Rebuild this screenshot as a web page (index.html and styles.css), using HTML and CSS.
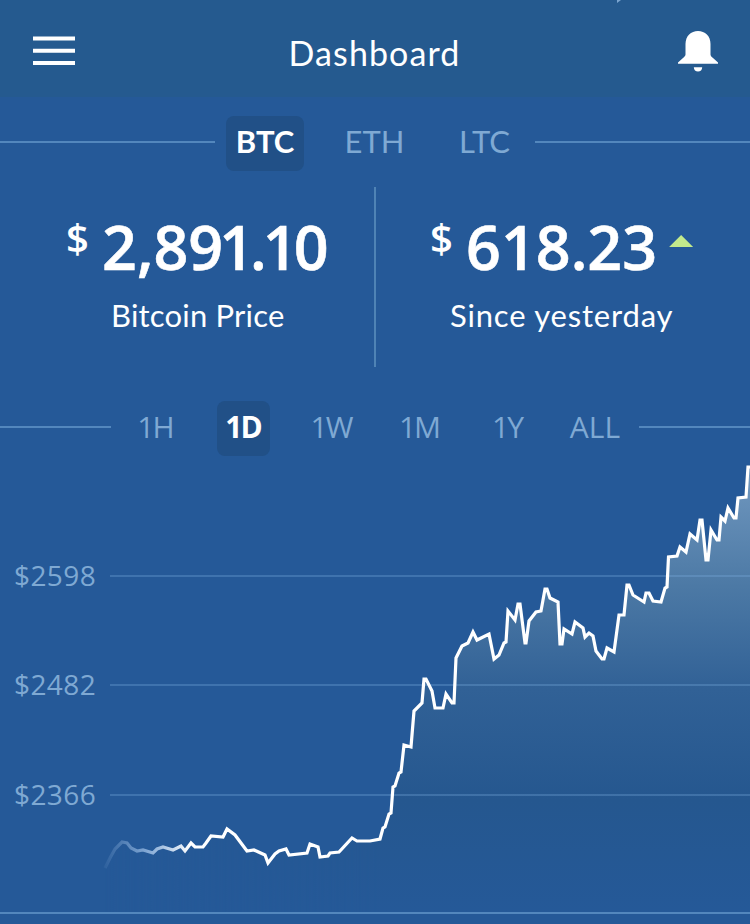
FILE: index.html
```html
<!DOCTYPE html>
<html lang="en">
<head>
  <meta charset="UTF-8">
  <meta name="viewport" content="width=device-width, initial-scale=1.0">
  <title>Dashboard</title>
  <link rel="stylesheet" href="styles.css">
</head>
<body>
  <header class="header">
    <button class="icon-btn menu-btn" aria-label="Menu">
      <svg width="42" height="30" viewBox="0 0 42 30">
        <path d="M0 2.5h42M0 14.8h42M0 27h42" stroke="#fff" stroke-width="4"/>
      </svg>
    </button>
    <h1>Dashboard</h1>
    <button class="icon-btn bell-btn" aria-label="Notifications">
      <svg width="40" height="41" viewBox="0 0 40 41">
        <path d="M7.5 13C7.5 5 13 0 20 0s12.500 5 12.500 13v10.500c0 1.500 1.300 2.500 2.500 3.500l5 4.500v1.200H0v-1.200L5 27c1.300-1.200 2.500-2 2.500-3.500z" fill="#fff"/>
        <path d="M15.800 36.200h8.400c0 2.700-1.800 4.300-4.200 4.300s-4.200-1.600-4.200-4.300z" fill="#fff"/>
      </svg>
    </button>
    <svg class="notch" width="4" height="3" viewBox="0 0 4 3"><path d="M0 0h4L0 3z" fill="#7ba5d0"/></svg>
  </header>

  <nav class="tabs coins">
    <span class="rule"></span>
    <button class="tab active">BTC</button>
    <button class="tab">ETH</button>
    <button class="tab">LTC</button>
    <span class="rule"></span>
  </nav>

  <section class="summary">
    <div class="stat">
      <div class="amount price"><span class="currency">$</span><span class="value">2,8<span class="tight">91.1</span>0</span></div>
      <div class="label label-price">Bitcoin Price</div>
    </div>
    <div class="stat">
      <div class="amount change"><span class="currency">$</span><span class="value">618.23</span><span class="up"></span></div>
      <div class="label label-change">Since yesterday</div>
    </div>
  </section>

  <nav class="tabs ranges">
    <span class="rule"></span>
    <button class="tab">1H</button>
    <button class="tab active">1D</button>
    <button class="tab">1W</button>
    <button class="tab">1M</button>
    <button class="tab">1Y</button>
    <button class="tab all">ALL</button>
    <span class="rule"></span>
  </nav>

  <svg class="chart" width="750" height="468" viewBox="0 456 750 468">
    <defs>
      <linearGradient id="lineFade" gradientUnits="userSpaceOnUse" x1="103" y1="0" x2="190" y2="0">
        <stop offset="0" stop-color="#a9c9ee" stop-opacity="0.05"/>
        <stop offset="0.5" stop-color="#a9c9ee" stop-opacity="0.7"/>
        <stop offset="1" stop-color="#fff"/>
      </linearGradient>
      <linearGradient id="areaFade" gradientUnits="userSpaceOnUse" x1="0" y1="466" x2="0" y2="912">
        <stop offset="0" stop-color="#7299c0"/>
        <stop offset="0.27" stop-color="#4c79a5"/>
        <stop offset="0.5" stop-color="#316196"/>
        <stop offset="0.75" stop-color="#25578f"/>
        <stop offset="1" stop-color="#255998"/>
      </linearGradient>
      <linearGradient id="sideFade" gradientUnits="userSpaceOnUse" x1="103" y1="0" x2="380" y2="0">
        <stop offset="0" stop-color="#fff" stop-opacity="0"/>
        <stop offset="1" stop-color="#fff"/>
      </linearGradient>
      <mask id="sideMask" maskUnits="userSpaceOnUse" x="100" y="456" width="650" height="468">
        <rect x="100" y="456" width="650" height="468" fill="url(#sideFade)"/>
      </mask>
    </defs>

    <path id="area" fill="url(#areaFade)" mask="url(#sideMask)"/>

    <g class="grid">
      <path d="M110 576H750M110 685H750M110 795H750"/>
    </g>
    <path class="baseline" d="M0 913H750"/>

    <g class="axis">
      <text x="14" y="586">$2598</text>
      <text x="14" y="695">$2482</text>
      <text x="14" y="805">$2366</text>
    </g>

    <path id="line" class="line"/>
  </svg>

  <script>
    const points = [
      [105, 868], [110, 858], [115, 849], [122, 842], [127, 843], [131, 848], [137, 851], [143, 850],
      [153, 853], [157, 849], [163, 847], [173, 850], [181, 846], [185, 851], [191, 843], [195, 847],
      [203, 847], [206, 843], [211, 836], [223, 837], [227, 829], [235, 835], [247, 851], [254, 850],
      [265, 855], [268, 863], [275, 854], [279, 851], [286, 849], [289, 855], [307, 853], [310, 844],
      [318, 847], [320, 857], [328, 856], [330, 853], [339, 852], [352, 838], [357, 841], [370, 841],
      [380, 839], [383, 828], [385, 827], [389, 814], [391, 813], [393, 787], [395, 786], [399, 773],
      [401, 772], [404, 745], [411, 747], [414, 711], [422, 703], [424, 679], [426, 679], [432, 691],
      [435, 708], [443, 708], [446, 694], [452, 703], [454, 703], [456, 658], [462, 646], [468, 643],
      [473, 632], [477, 640], [489, 634], [494, 659], [499, 655], [504, 643], [506, 642], [508, 611],
      [515, 620], [518, 604], [520, 604], [525, 643], [526, 643], [529, 621], [536, 612], [541, 611],
      [545, 589], [547, 589], [550, 598], [558, 602], [560, 644], [562, 644], [564, 629], [572, 634],
      [575, 622], [583, 628], [585, 637], [589, 633], [593, 636], [596, 651], [602, 659], [604, 659],
      [607, 648], [614, 652], [619, 615], [624, 615], [627, 585], [629, 585], [633, 595], [644, 602],
      [646, 593], [649, 593], [653, 601], [661, 602], [665, 588], [667, 587], [668.5, 557], [677, 556],
      [680, 547], [686, 552], [690, 534], [697, 540], [700, 520], [702, 520], [706, 560], [708, 560],
      [711, 530], [717, 540], [719, 540], [721, 517], [725, 521], [728, 508], [734, 518], [736, 518],
      [738, 498], [746, 497], [748, 467], [752, 467]
    ];
    const d = 'M' + points.map(p => p.join(' ')).join('L');

    document.getElementById('line').setAttribute('d', d);
    document.getElementById('area').setAttribute('d', d + 'V912H105Z');
  </script>
</body>
</html>
```
FILE: styles.css
```css
* {
  box-sizing: border-box;
}

body {
  margin: 0;
  width: 750px;
  height: 924px;
  overflow: hidden;
  background: #255998;
  color: white;
  font-family: Lato, "Open Sans", sans-serif;
}

button {
  background: none;
  border: none;
  padding: 0;
  color: inherit;
  font-family: inherit;
  cursor: pointer;
}

svg {
  display: block;
}

.header {
  position: relative;
  display: flex;
  justify-content: space-between;
  height: 97px;
  padding: 0 32px 0 33px;
  background: #255a8f;
}

.header h1 {
  margin: 32px 0 0 -4px;
  font-size: 34px;
  line-height: 42px;
  font-weight: 400;
  letter-spacing: 1.1px;
}

.menu-btn {
  height: 30px;
  margin-top: 36px;
}

.bell-btn {
  height: 41px;
  margin-top: 31px;
}

.notch {
  position: absolute;
  top: 0;
  left: 617px;
}

.tabs {
  display: grid;
  align-items: center;
  justify-items: center;
  height: 55px;
}

.rule {
  width: 100%;
  height: 2px;
  margin-bottom: 3px;
  background: #5387bd;
}

.tab {
  height: 55px;
  border-radius: 8px;
  padding-bottom: 6px;
  font-size: 31px;
  color: #7fa9d3;
  white-space: nowrap;
}

.tab.active {
  background: #215087;
  color: white;
  font-weight: 700;
}

.coins {
  margin-top: 19px;
  grid-template-columns: 215px 100px 119px 101px 215px;
}

.coins .active {
  width: 78px;
}

.summary {
  display: grid;
  grid-template-columns: 375px 375px;
  height: 180px;
  margin-top: 16px;
}

.stat + .stat {
  border-left: 2px solid #4f83b5;
  margin-left: -1px;
}

.amount {
  display: flex;
  height: 90px;
  padding-top: 19px;
  font-family: "Open Sans", sans-serif;
  font-weight: 600;
}

.price {
  padding-left: 66px;
}

.change {
  padding-left: 54px;
}

.currency {
  width: 36px;
  font-size: 40px;
  line-height: 64px;
}

.value {
  font-size: 61px;
  line-height: 82px;
  -webkit-text-stroke: 0.6px white;
}

.price .tight {
  letter-spacing: -4px;
}

.up {
  margin: 29px 0 0 12px;
  width: 24px;
  height: 12px;
  background: #c3ea8c;
  clip-path: polygon(50% 0, 100% 100%, 0 100%);
}

.label {
  margin-top: 17px;
  font-size: 31px;
  line-height: 42px;
  letter-spacing: 0.2px;
}

.label-price {
  padding-left: 111px;
}

.label-change {
  padding-left: 74px;
  letter-spacing: 0.8px;
}

.ranges {
  margin-top: 34px;
  grid-template-columns: 111px repeat(6, 88px) 111px;
  font-family: "Open Sans", sans-serif;
}

.ranges .tab {
  padding-bottom: 5px;
  font-size: 30px;
  letter-spacing: -2px;
}

.ranges .active {
  width: 53px;
}

.ranges .all {
  letter-spacing: 0;
}

.chart .grid path {
  stroke: #7fb0e0;
  stroke-opacity: 0.3;
  stroke-width: 2;
}

.chart .baseline {
  stroke: #5387bd;
  stroke-width: 2;
}

.chart .axis text {
  fill: #7fa9d3;
  font-family: "Open Sans", sans-serif;
  font-size: 28px;
  letter-spacing: 0.4px;
}

.chart .line {
  fill: none;
  stroke: url(#lineFade);
  stroke-width: 3.2;
}
```
